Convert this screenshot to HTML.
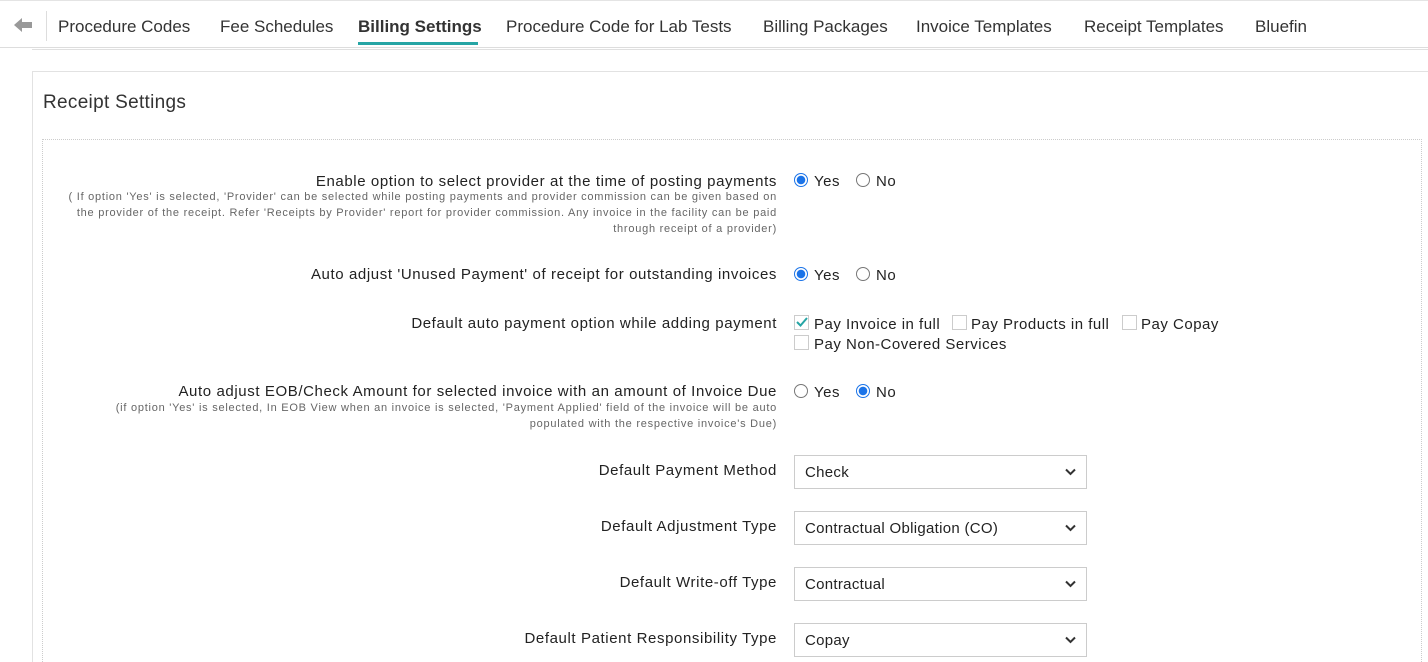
<!DOCTYPE html>
<html><head><meta charset="utf-8"><style>
*{box-sizing:border-box;margin:0;padding:0}
html,body{width:1428px;height:662px;overflow:hidden}
body{background:#fff;font-family:"Liberation Sans",sans-serif;color:#222;position:relative}
.nav{position:absolute;left:0;top:0;width:1428px;height:48px;border-top:1px solid #e4e4e4;border-bottom:1px solid #ddd}
.nav .div{position:absolute;left:46px;top:10px;width:1px;height:30px;background:#ddd}
.tab{position:absolute;top:16px;font-size:17px;color:#333;white-space:nowrap}
.tab.act{font-weight:bold;color:#333}
.ul{position:absolute;left:358px;top:41px;width:120px;height:3px;background:#26a5a5}
.line2{position:absolute;left:32px;top:49px;right:0;height:1px;background:#e0e0e0}
.panel{position:absolute;left:32px;top:71px;width:1396px;height:591px;border:1px solid #e2e2e2;border-right:none;border-bottom:none}
.title{position:absolute;left:43px;top:92px;font-size:19px;color:#333;letter-spacing:0.3px}
.inner{position:absolute;left:42px;top:139px;width:1380px;height:523px;border:1px dotted #ccc;border-bottom:none}
.lbl{position:absolute;right:651px;font-size:15px;color:#222;text-align:right;white-space:nowrap;letter-spacing:0.6px}
.note{position:absolute;right:651px;font-size:11px;color:#666;text-align:right;line-height:16px;white-space:nowrap;letter-spacing:0.75px}
.opt{position:absolute;font-size:15px;color:#222;white-space:nowrap;letter-spacing:0.5px}
.rad{position:absolute;width:14px;height:14px;border-radius:50%;border:1px solid #777;background:#fff}
.rad.on{border:1px solid #1a73e8;background:radial-gradient(circle,#1a73e8 0 4px,#fff 4.5px)}
.cb{position:absolute;width:15px;height:15px;border:1px solid #ccc;background:#fff}
.sel{position:absolute;left:794px;width:293px;height:34px;border:1px solid #ccc;font-size:15px;padding:8px 10px;color:#222;letter-spacing:0.3px}
.sel svg{position:absolute;right:10px;top:12px}
</style></head><body>
<div class="nav">
<svg style="position:absolute;left:14px;top:17px" width="18" height="14" viewBox="0 0 18 14"><path d="M0 7 L8 0 L8 4 L18 4 L18 10 L8 10 L8 14 Z" fill="#999"/></svg>
<div class="div"></div>
<span class="tab" style="left:58px">Procedure Codes</span>
<span class="tab" style="left:220px">Fee Schedules</span>
<span class="tab act" style="left:358px">Billing Settings</span>
<span class="tab" style="left:506px">Procedure Code for Lab Tests</span>
<span class="tab" style="left:763px">Billing Packages</span>
<span class="tab" style="left:916px">Invoice Templates</span>
<span class="tab" style="left:1084px">Receipt Templates</span>
<span class="tab" style="left:1255px">Bluefin</span>
<div class="ul"></div>
</div>
<div class="line2"></div>
<div class="panel"></div>
<div class="title">Receipt Settings</div>
<div class="inner"></div>

<div class="lbl" style="top:173px">Enable option to select provider at the time of posting payments</div>
<div class="note" style="top:189px">( If option 'Yes' is selected, 'Provider' can be selected while posting payments and provider commission can be given based on<br>the provider of the receipt. Refer 'Receipts by Provider' report for provider commission. Any invoice in the facility can be paid<br>through receipt of a provider)</div>
<div class="rad on" style="left:794px;top:173px"></div><span class="opt" style="left:814px;top:173px">Yes</span>
<div class="rad" style="left:856px;top:173px"></div><span class="opt" style="left:876px;top:173px">No</span>

<div class="lbl" style="top:266px">Auto adjust 'Unused Payment' of receipt for outstanding invoices</div>
<div class="rad on" style="left:794px;top:267px"></div><span class="opt" style="left:814px;top:267px">Yes</span>
<div class="rad" style="left:856px;top:267px"></div><span class="opt" style="left:876px;top:267px">No</span>

<div class="lbl" style="top:315px">Default auto payment option while adding payment</div>
<div class="cb" style="left:794px;top:315px"></div>
<svg style="position:absolute;left:796px;top:317px" width="12" height="10"><path d="M1 5 L4.5 8.5 L11 1" stroke="#26a5a5" stroke-width="2" fill="none"/></svg>
<span class="opt" style="left:814px;top:316px">Pay Invoice in full</span>
<div class="cb" style="left:952px;top:315px"></div><span class="opt" style="left:971px;top:316px">Pay Products in full</span>
<div class="cb" style="left:1122px;top:315px"></div><span class="opt" style="left:1141px;top:316px">Pay Copay</span>
<div class="cb" style="left:794px;top:335px"></div><span class="opt" style="left:814px;top:336px">Pay Non-Covered Services</span>

<div class="lbl" style="top:383px">Auto adjust EOB/Check Amount for selected invoice with an amount of Invoice Due</div>
<div class="note" style="top:400px">(if option 'Yes' is selected, In EOB View when an invoice is selected, 'Payment Applied' field of the invoice will be auto<br>populated with the respective invoice's Due)</div>
<div class="rad" style="left:794px;top:384px"></div><span class="opt" style="left:814px;top:384px">Yes</span>
<div class="rad on" style="left:856px;top:384px"></div><span class="opt" style="left:876px;top:384px">No</span>

<div class="lbl" style="top:462px">Default Payment Method</div>
<div class="sel" style="top:455px">Check<svg width="11" height="8"><path d="M1 1.5 L5.5 6 L10 1.5" stroke="#333" stroke-width="2" fill="none"/></svg></div>
<div class="lbl" style="top:518px">Default Adjustment Type</div>
<div class="sel" style="top:511px">Contractual Obligation (CO)<svg width="11" height="8"><path d="M1 1.5 L5.5 6 L10 1.5" stroke="#333" stroke-width="2" fill="none"/></svg></div>
<div class="lbl" style="top:574px">Default Write-off Type</div>
<div class="sel" style="top:567px">Contractual<svg width="11" height="8"><path d="M1 1.5 L5.5 6 L10 1.5" stroke="#333" stroke-width="2" fill="none"/></svg></div>
<div class="lbl" style="top:630px">Default Patient Responsibility Type</div>
<div class="sel" style="top:623px">Copay<svg width="11" height="8"><path d="M1 1.5 L5.5 6 L10 1.5" stroke="#333" stroke-width="2" fill="none"/></svg></div>
</body></html>
